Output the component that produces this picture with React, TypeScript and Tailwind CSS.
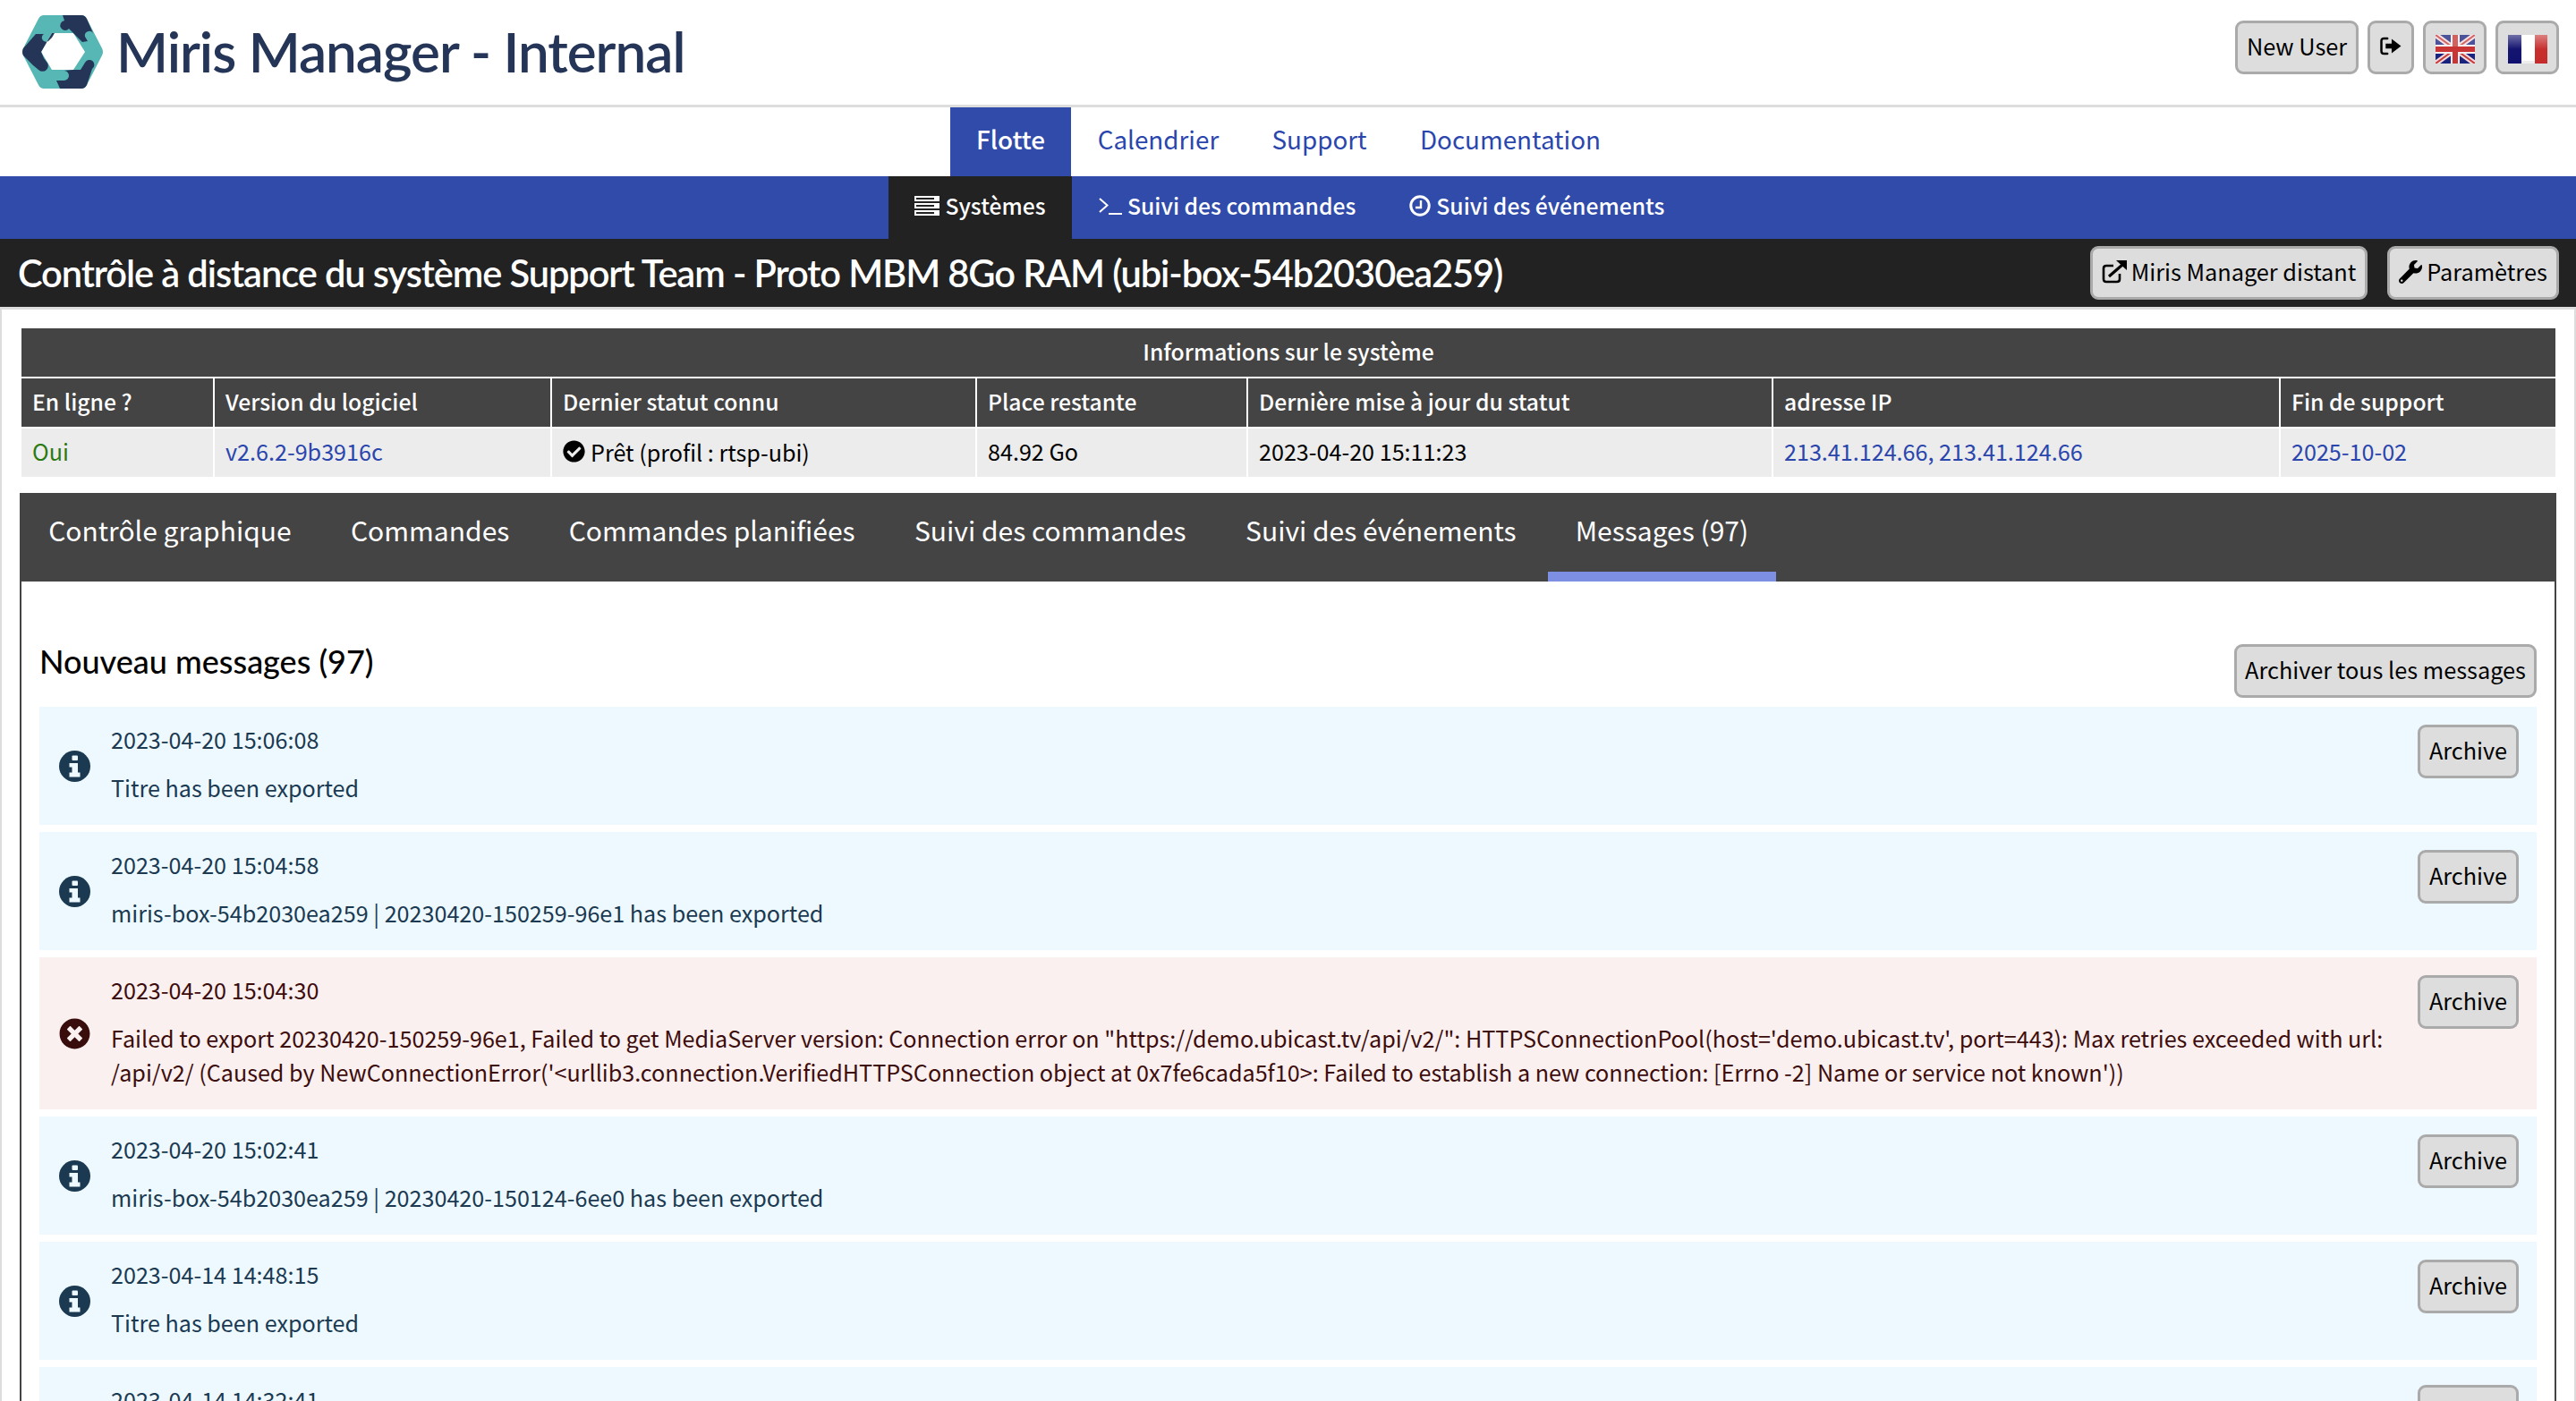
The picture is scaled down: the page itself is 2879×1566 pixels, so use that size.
import React from "react";
import { FaCheckCircle, FaTimesCircle, FaWrench } from "react-icons/fa";

const sans = "[font-family:'Noto_Sans_CJK_SC','Source_Sans_Pro',sans-serif]";

function Logo() {
  return (
    <svg viewBox="0 0 90 82" className="w-[90px] h-[82px] shrink-0">
      <path d="M24 0 L66 0 Q70 0 72 4 L89 37 Q91 41 89 45 L72 78 Q70 82 66 82 L24 82 Q20 82 18 78 L1 45 Q-1 41 1 37 L18 4 Q20 0 24 0 Z M33 20 L21 41 L33 61 L57 61 L70 41 L57 20 Z" fillRule="evenodd" fill="#57b7b4" />
      <path d="M45 0 L66 0 Q70 0 72 4 L79 20 A5 5 0 0 0 70 24 L73 29 L67 30 L57 20 L52 15 A5.5 5.5 0 1 1 47 6 Z" fill="#253558" />
      <path d="M15 21 L24 21 A4.5 4.5 0 0 0 29 29 L33 25 L36 20 L33 20 L21 41 L24 48 L27 52 A5.5 5.5 0 1 1 18 61 L12 56 L1 45 Q-1 41 1 37 Z" fill="#253558" />
      <path d="M46 62 L57 61 L65 61 L70 53 A5.5 5.5 0 1 1 78 60 L72 78 Q70 82 66 82 L42 82 L38 73 L47 73 A5 5 0 1 0 46 62 Z" fill="#253558" />
    </svg>
  );
}

function Btn({ children, className = "" }: { children: React.ReactNode; className?: string }) {
  return (
    <button className={`h-[60px] bg-[#dddddd] border-[3px] border-[#aaaaaa] rounded-[9px] text-black text-[25.3px] leading-none pb-[3px] flex items-center justify-center whitespace-nowrap ${className}`}>
      {children}
    </button>
  );
}

function UK() {
  return (
    <svg viewBox="0 0 44 32" className="w-[44px] h-[32px] blur-[0.5px] mt-[6px]">
      <rect width="44" height="32" fill="#1a237e" />
      <path d="M0 0 L44 32 M44 0 L0 32" stroke="#f3dcdc" strokeWidth="6" />
      <path d="M0 0 L44 32 M44 0 L0 32" stroke="#c93a3a" strokeWidth="2" />
      <path d="M22 0 V32 M0 16 H44" stroke="#f6eeee" strokeWidth="10" />
      <path d="M22 0 V32 M0 16 H44" stroke="#c93434" strokeWidth="6" />
      <rect width="44" height="13" fill="#ffffff" opacity="0.22" />
    </svg>
  );
}

function FR() {
  return (
    <svg viewBox="0 0 44 32" className="w-[44px] h-[32px] mt-[6px]">
      <defs>
        <linearGradient id="gloss" x1="0" y1="0" x2="0" y2="1">
          <stop offset="0" stopColor="#ffffff" stopOpacity="0.4" />
          <stop offset="0.5" stopColor="#ffffff" stopOpacity="0.02" />
          <stop offset="1" stopColor="#ffffff" stopOpacity="0" />
        </linearGradient>
      </defs>
      <rect width="15" height="32" fill="#10106e" />
      <rect x="15" width="15" height="32" fill="#ffffff" />
      <rect x="30" width="14" height="32" fill="#c62b2b" />
      <rect width="44" height="32" fill="url(#gloss)" />
      <rect x="15" y="29" width="15" height="3" fill="#eeeeee" />
    </svg>
  );
}

function SignOut() {
  return (
    <svg viewBox="0 0 26 22" className="w-[26px] h-[21px]">
      <path d="M9 2 H5 Q2 2 2 5 V17 Q2 20 5 20 H9" fill="none" stroke="black" strokeWidth="2.6" strokeLinecap="round" />
      <path d="M7 8 H14 V2.5 L25 11 L14 19.5 V14 H7 Z" fill="black" />
    </svg>
  );
}

function ExtLink() {
  return (
    <svg viewBox="0 0 28 26" className="w-[28px] h-[26px] shrink-0">
      <path d="M20 15 V21 Q20 24 17 24 H5 Q2 24 2 21 V9 Q2 6 5 6 H13" fill="none" stroke="black" strokeWidth="2.6" />
      <path d="M8 18 L23 5" stroke="black" strokeWidth="3.2" />
      <path d="M16 0 H28 V11 Z" fill="black" />
    </svg>
  );
}

function ServerIcon() {
  return (
    <svg viewBox="0 0 28 22" className="w-[28px] h-[22px] shrink-0">
      <path d="M0 0 H28 V6 H0 Z M0 8 H28 V14 H0 Z M0 16 H28 V22 H0 Z" fill="white" />
      <path d="M2 2 H22 V4 H2 Z M2 10 H22 V12 H2 Z M2 18 H22 V20 H2 Z" fill="#222222" />
    </svg>
  );
}

function TerminalIcon() {
  return (
    <svg viewBox="0 0 26 22" className="w-[26px] h-[22px] shrink-0">
      <path d="M1 3 L9.5 10.5 L1 18" fill="none" stroke="white" strokeWidth="2" />
      <path d="M11 20 H26" stroke="white" strokeWidth="2" />
    </svg>
  );
}

function ClockIcon() {
  return (
    <svg viewBox="0 0 24 24" className="w-[24px] h-[24px] shrink-0">
      <circle cx="12" cy="12" r="10.2" fill="none" stroke="white" strokeWidth="3" />
      <path d="M13 6 V14 H7" fill="none" stroke="white" strokeWidth="2.4" />
    </svg>
  );
}

function InfoIcon() {
  return (
    <svg viewBox="0 0 35 35" className="w-[35px] h-[35px]">
      <circle cx="17.5" cy="17.5" r="17.5" fill="#1b3a52" />
      <rect x="14.5" y="5.5" width="6.5" height="5.5" rx="1" fill="#edf9fe" />
      <path d="M11.5 14 H21 V24.5 H23.5 V29.5 H11.5 V24.5 H14.5 V18.5 H11.5 Z" fill="#edf9fe" />
    </svg>
  );
}

const cols = "grid grid-cols-[214px_375px_473px_301px_585px_565px_307px] gap-x-[2px]";

const heads = ["En ligne ?", "Version du logiciel", "Dernier statut connu", "Place restante", "Dernière mise à jour du statut", "adresse IP", "Fin de support"];

function SystemInfo() {
  return (
    <div className="mx-[22px] w-[2832px] flex flex-col gap-y-[2px]">
      <div className="h-[54px] bg-[#444444] text-white font-medium text-[24.7px] leading-[50px] text-center">Informations sur le système</div>
      <div className={cols}>
        {heads.map((h) => (
          <div key={h} className="h-[54px] bg-[#444444] text-white font-medium text-[24.7px] leading-[50px] px-[12px] whitespace-nowrap">{h}</div>
        ))}
      </div>
      <div className={`${cols} text-[25.15px] leading-[50px]`}>
        <div className="h-[54px] bg-[#ececec] px-[12px] text-[#2b7a12]">Oui</div>
        <div className="h-[54px] bg-[#ececec] px-[12px] text-[#2a46ad]">v2.6.2-9b3916c</div>
        <div className="h-[54px] bg-[#ececec] px-[12px] pb-[3px] text-black flex items-center gap-[6px]">
          <FaCheckCircle className="w-[25px] h-[25px] shrink-0" />
          <span>Prêt (profil : rtsp-ubi)</span>
        </div>
        <div className="h-[54px] bg-[#ececec] px-[12px] text-black">84.92 Go</div>
        <div className="h-[54px] bg-[#ececec] px-[12px] text-black">2023-04-20 15:11:23</div>
        <div className="h-[54px] bg-[#ececec] px-[12px] text-[#2a46ad]">213.41.124.66, 213.41.124.66</div>
        <div className="h-[54px] bg-[#ececec] px-[12px] text-[#2a46ad]">2025-10-02</div>
      </div>
    </div>
  );
}

const tabs = ["Contrôle graphique", "Commandes", "Commandes planifiées", "Suivi des commandes", "Suivi des événements", "Messages (97)"];

type Msg = { date: string; text?: string; error?: boolean };

const messages: Msg[] = [
  { date: "2023-04-20 15:06:08", text: "Titre has been exported" },
  { date: "2023-04-20 15:04:58", text: "miris-box-54b2030ea259 | 20230420-150259-96e1 has been exported" },
  {
    date: "2023-04-20 15:04:30",
    error: true,
    text: "Failed to export 20230420-150259-96e1, Failed to get MediaServer version: Connection error on \"https://demo.ubicast.tv/api/v2/\": HTTPSConnectionPool(host='demo.ubicast.tv', port=443): Max retries exceeded with url: /api/v2/ (Caused by NewConnectionError('<urllib3.connection.VerifiedHTTPSConnection object at 0x7fe6cada5f10>: Failed to establish a new connection: [Errno -2] Name or service not known'))",
  },
  { date: "2023-04-20 15:02:41", text: "miris-box-54b2030ea259 | 20230420-150124-6ee0 has been exported" },
  { date: "2023-04-14 14:48:15", text: "Titre has been exported" },
  { date: "2023-04-14 14:32:41" },
];

function Message({ m }: { m: Msg }) {
  return (
    <div className={`flex items-start min-h-[132px] pl-[22px] pr-[20px] shrink-0 ${m.error ? "bg-[#faf0ef] text-[#3d0c0c]" : "bg-[#edf9fe] text-[#1b3a52]"}`}>
      <div className="self-center w-[35px] h-[35px] shrink-0">
        {m.error ? <FaTimesCircle className="w-[35px] h-[35px] text-[#3a0d0d]" /> : <InfoIcon />}
      </div>
      <div className="flex-1 pl-[23px] pt-[17px] pb-[23px] pr-[30px] text-[25.15px] leading-[38px]">
        <div>{m.date}</div>
        {m.text && <div className="mt-[16px]">{m.text}</div>}
      </div>
      <Btn className="w-[113px] mt-[20px] shrink-0">Archive</Btn>
    </div>
  );
}

export default function App() {
  return (
    <div className={`h-screen overflow-hidden bg-white flex flex-col ${sans}`}>
      <header className="h-[120px] shrink-0 border-b-[3px] border-[#dddddd] flex items-start justify-between pl-[25px] pr-[19px]">
        <div className="flex items-center gap-[15px] pt-[17px]">
          <Logo />
          <span className="[font-family:Lato,sans-serif] text-[#253558] text-[62px] tracking-[-1px] leading-[76px] pb-[3px] font-semibold whitespace-nowrap">Miris Manager - Internal</span>
        </div>
        <div className="flex items-start gap-[10px] pt-[23px]">
          <Btn className="w-[138px]">New User</Btn>
          <Btn className="w-[52px]"><SignOut /></Btn>
          <Btn className="w-[71px]"><UK /></Btn>
          <Btn className="w-[71px]"><FR /></Btn>
        </div>
      </header>
      <nav className="h-[77px] shrink-0 pl-[1062px] flex text-[27.8px] leading-[71px] text-[#2a46ad]">
        <a className="w-[135px] text-center bg-[#304ba9] text-white font-medium">Flotte</a>
        <a className="px-[29.7px]">Calendrier</a>
        <a className="px-[29.7px]">Support</a>
        <a className="px-[29.7px]">Documentation</a>
      </nav>
      <nav className="h-[70px] shrink-0 bg-[#304ba9] pl-[993px] flex text-[24.7px] text-white font-medium">
        <a className="w-[205px] bg-[#222222] pb-[4px] flex items-center justify-center gap-[6px]"><ServerIcon />Systèmes</a>
        <a className="px-[30px] pb-[4px] flex items-center gap-[6px]"><TerminalIcon />Suivi des commandes</a>
        <a className="px-[30px] pb-[4px] flex items-center gap-[6px]"><ClockIcon />Suivi des événements</a>
      </nav>
      <div className="h-[76px] shrink-0 bg-[#222222] flex items-center justify-between pl-[20px] pr-[19px]">
        <h1 className="[font-family:Lato,sans-serif] text-white text-[41.6px] tracking-[-1.09px] leading-[72px] font-semibold whitespace-nowrap">Contrôle à distance du système Support Team - Proto MBM 8Go RAM (ubi-box-54b2030ea259)</h1>
        <div className="flex gap-[22px]">
          <Btn className="w-[310px] gap-[5px]"><ExtLink />Miris Manager distant</Btn>
          <Btn className="w-[192px] gap-[5px]"><FaWrench className="w-[26px] h-[26px]" />Paramètres</Btn>
        </div>
      </div>
      <main className="flex-1 min-h-0 border-x-[2px] border-t-[3px] border-[#dddddd] pt-[21px] flex flex-col">
        <SystemInfo />
        <section className="mx-[20px] mt-[18px] flex-1 min-h-0 border-x-[2px] border-[#444444] flex flex-col">
          <div className="h-[99px] shrink-0 bg-[#444444] flex -mx-[2px]">
            {tabs.map((t, i) => (
              <a key={t} className={`h-[99px] text-white text-[30px] leading-[82px] whitespace-nowrap ${i === 0 ? "-ml-[1px]" : ""} ${i === 5 ? "ml-[2px] mr-[2px] px-[31px] border-b-[11px] border-[#7c8fe3]" : "px-[33.2px]"}`}>{t}</a>
            ))}
          </div>
          <div className="flex-1 min-h-0 overflow-hidden px-[20px]">
            <div className="flex items-start justify-between h-[140px]">
              <h2 className="[font-family:Lato,sans-serif] text-black text-[36px] leading-[50px] mt-[64px] font-medium whitespace-nowrap">Nouveau messages (97)</h2>
              <Btn className="w-[338px] mt-[70px]">Archiver tous les messages</Btn>
            </div>
            <div className="flex flex-col gap-[8px]">
              {messages.map((m) => <Message key={m.date} m={m} />)}
            </div>
          </div>
        </section>
      </main>
    </div>
  );
}
